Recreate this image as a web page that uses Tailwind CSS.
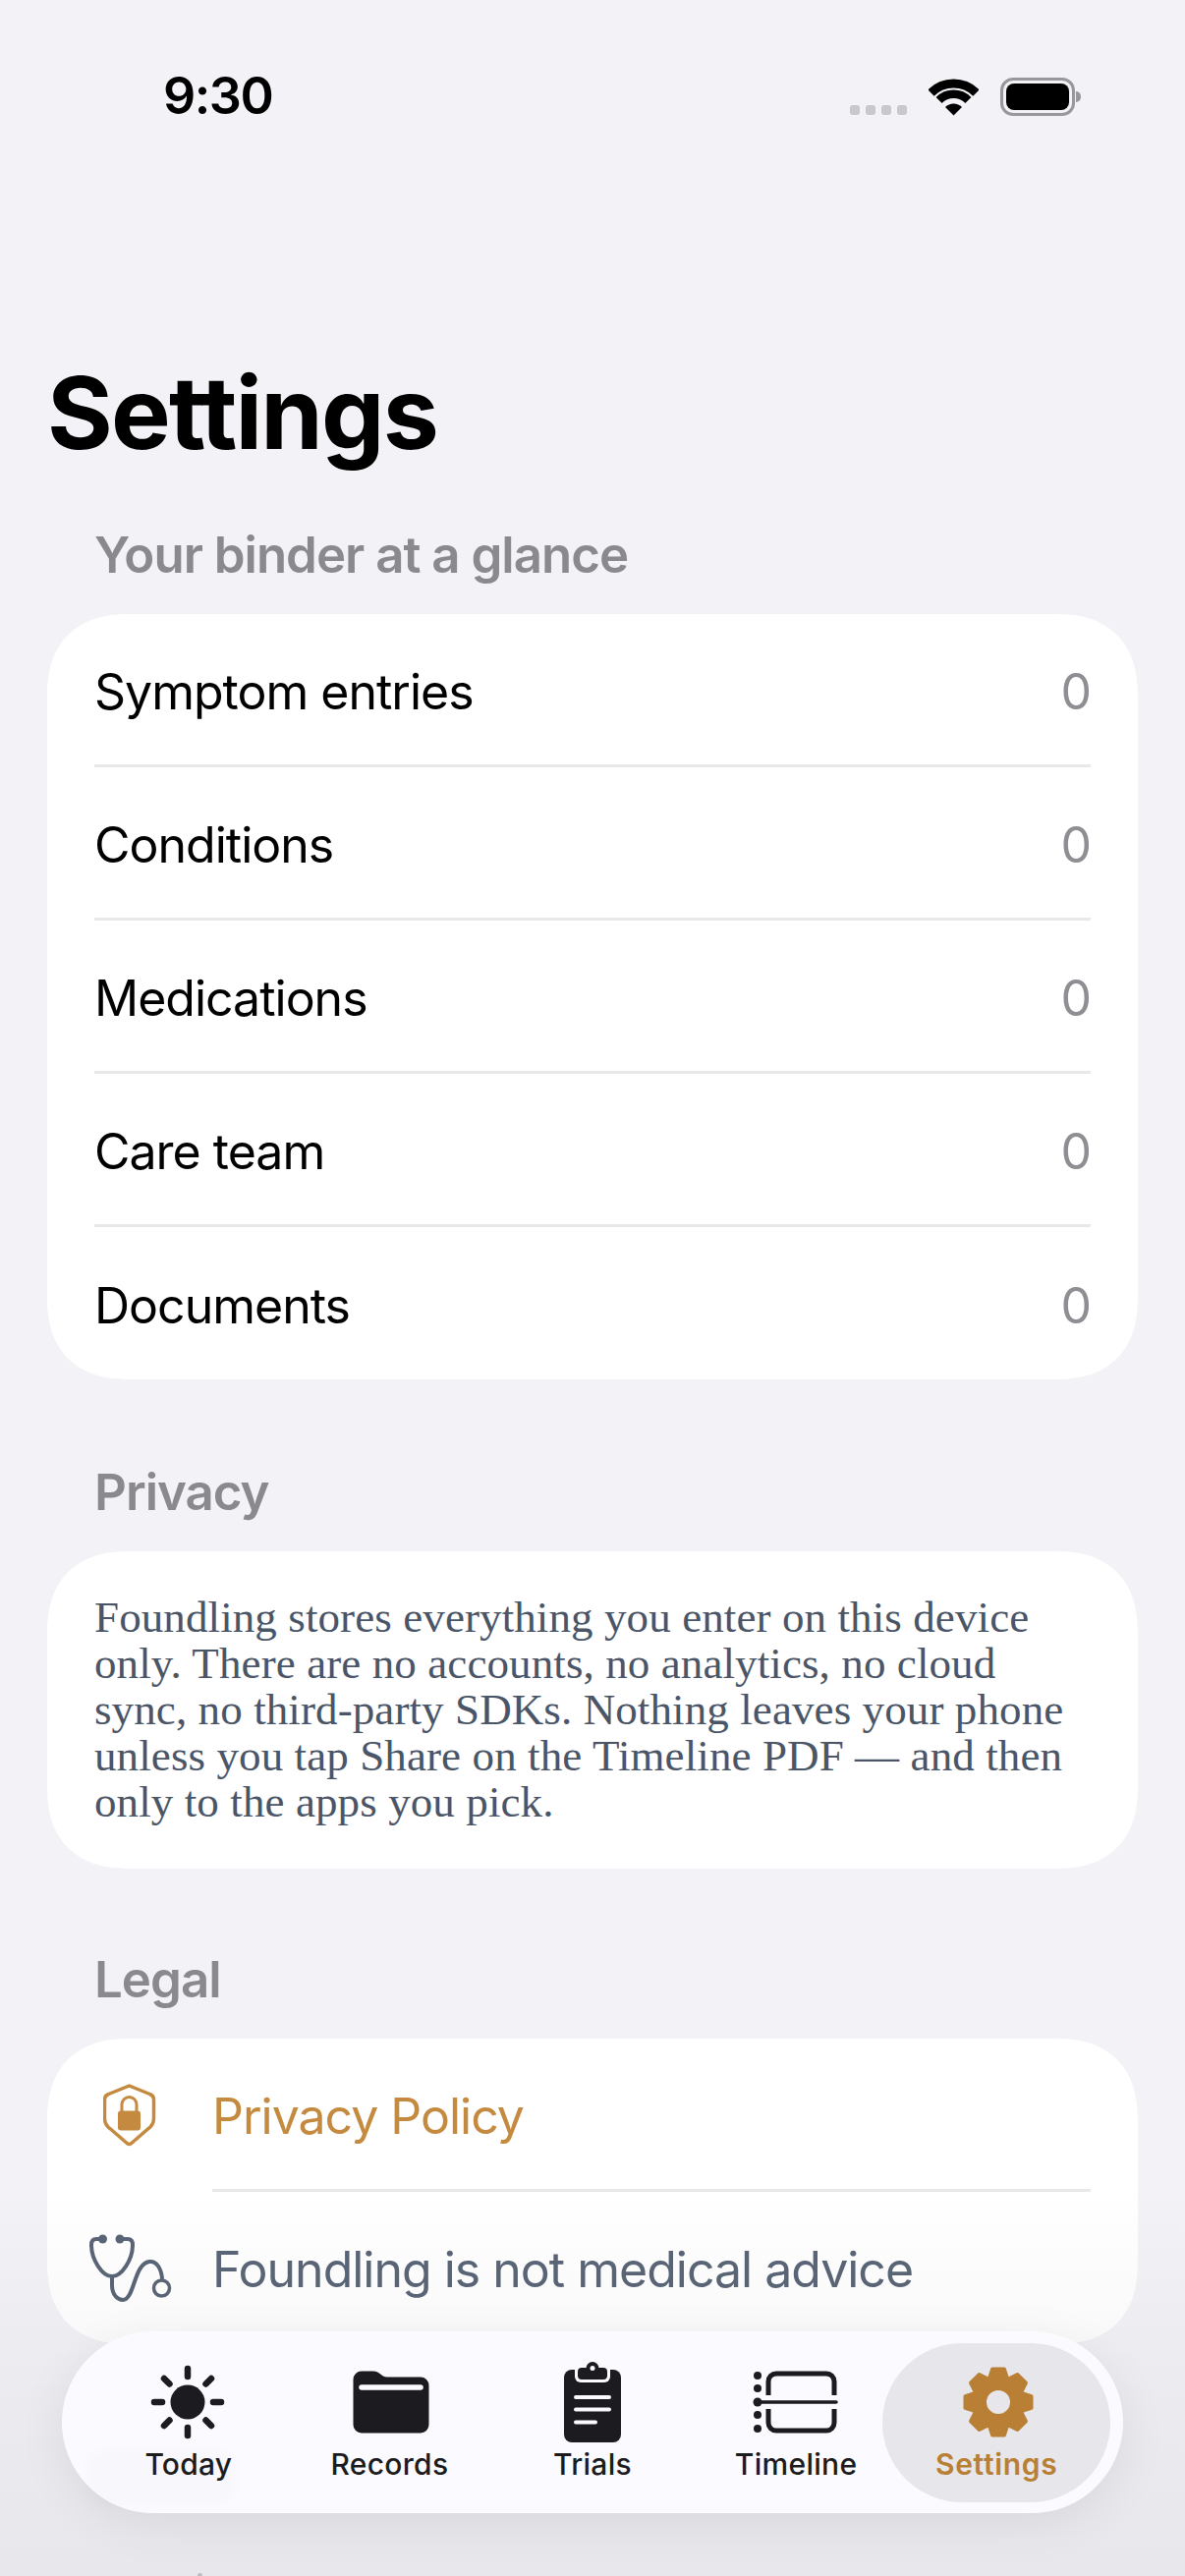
<!DOCTYPE html>
<html lang="en">
<head>
    <meta charset="UTF-8">
    <meta name="viewport" content="width=device-width, initial-scale=1.0">
    <title>Settings</title>
    <script src="https://cdn.jsdelivr.net/npm/@tailwindcss/browser@4"></script>
</head>
<body>
    <div class="relative w-[1206px] h-[2622px] overflow-hidden bg-[#f2f2f7] font-[Inter,sans-serif] text-black">

        <!-- status bar -->
        <div class="flex items-center justify-between h-[40px] mt-[78px] pl-[166px] pr-[106px]">
            <span class="text-[52px] leading-[40px] font-semibold tracking-[-1.5px]">9:30</span>
            <div class="flex items-start">
                <div class="flex gap-[6px] mt-[28px] mr-[22px]">
                    <span class="w-[10px] h-[10px] rounded-[3px] bg-[#c7c7cc]"></span>
                    <span class="w-[10px] h-[10px] rounded-[3px] bg-[#c7c7cc]"></span>
                    <span class="w-[10px] h-[10px] rounded-[3px] bg-[#c7c7cc]"></span>
                    <span class="w-[10px] h-[10px] rounded-[3px] bg-[#c7c7cc]"></span>
                </div>
                <svg class="mt-[1px] mr-[22px]" width="51" height="38" viewBox="0 0 51 38" fill="none">
                    <path d="M2.5 14.5 A32.5 32.5 0 0 1 48.5 14.5" stroke="#000" stroke-width="9"/>
                    <path d="M10.6 22 A21 21 0 0 1 40.4 22" stroke="#000" stroke-width="8.5"/>
                    <path d="M25.5 37.5 L17 29 A12 12 0 0 1 34 29 Z" fill="#000"/>
                </svg>
                <div class="flex items-center">
                    <div class="w-[76px] h-[39px] rounded-[13px] border-[3px] border-[#98989c] p-[3px]">
                        <div class="w-full h-full rounded-[8px] bg-black"></div>
                    </div>
                    <div class="w-[5px] h-[11px] ml-[1px] rounded-r-full bg-[#98989c]"></div>
                </div>
            </div>
        </div>

        <h1 class="ml-[48px] mt-[241px] text-[102px] leading-[122px] font-bold tracking-[-1.8px]">Settings</h1>

        <!-- binder counts -->
        <h2 class="ml-[96px] mt-[54px] h-[60px] text-[51px] leading-[60px] font-semibold tracking-[-1px] text-[#8a8a8e]">Your binder at a glance</h2>
        <div class="mx-[48px] mt-[30px] px-[48px] rounded-[84px] [corner-shape:superellipse(1.25)] bg-white text-[50px] tracking-[-1px]">
            <div class="flex items-center justify-between h-[156px] pt-[6px] border-b-[3px] border-[#e8e8ea]"><span>Symptom entries</span><span class="text-[#8e8e93]">0</span></div>
            <div class="flex items-center justify-between h-[156px] pt-[6px] border-b-[3px] border-[#e8e8ea]"><span>Conditions</span><span class="text-[#8e8e93]">0</span></div>
            <div class="flex items-center justify-between h-[156px] pt-[6px] border-b-[3px] border-[#e8e8ea]"><span>Medications</span><span class="text-[#8e8e93]">0</span></div>
            <div class="flex items-center justify-between h-[156px] pt-[6px] border-b-[3px] border-[#e8e8ea]"><span>Care team</span><span class="text-[#8e8e93]">0</span></div>
            <div class="flex items-center justify-between h-[155px] pt-[6px]"><span>Documents</span><span class="text-[#8e8e93]">0</span></div>
        </div>

        <!-- privacy -->
        <h2 class="ml-[96px] mt-[85px] h-[60px] text-[51px] leading-[60px] font-semibold tracking-[-1px] text-[#8a8a8e]">Privacy</h2>
        <div class="mx-[48px] mt-[30px] h-[323px] px-[48px] py-[44px] rounded-[84px] [corner-shape:superellipse(1.25)] bg-white font-['Liberation_Serif',serif] text-[45px] leading-[47px] tracking-[0.1px] text-[#4a5568]">
            Foundling stores everything you enter on this device<br>only. There are no accounts, no analytics, no cloud<br>sync, no third-party SDKs. Nothing leaves your phone<br>unless you tap Share on the Timeline PDF — and then<br>only to the apps you pick.
        </div>

        <!-- legal -->
        <h2 class="ml-[96px] mt-[83px] h-[60px] text-[51px] leading-[60px] font-semibold tracking-[-1px] text-[#8a8a8e]">Legal</h2>
        <div class="mx-[48px] mt-[30px] pr-[48px] rounded-[84px] [corner-shape:superellipse(1.25)] bg-white text-[50px] tracking-[-1px]">
            <div class="flex items-center h-[156px]">
                <div class="flex justify-center w-[168px]">
                    <svg width="54" height="64" viewBox="0 0 54 64" fill="none">
                        <path d="M26.5 2 L47.5 10.5 Q51.5 12 51.5 16 V35 Q51.5 42 45.5 46 L28.5 60.8 Q26.5 62 24.5 60.8 L7.5 46 Q1.5 42 1.5 35 V16 Q1.5 12 5.5 10.5 Z" stroke="#c48a3f" stroke-width="3.5" stroke-linejoin="round"/>
                        <path d="M19 28 V21 a7.5 7.5 0 0 1 15 0 V28" stroke="#c48a3f" stroke-width="3"/>
                        <rect x="15" y="27.5" width="23" height="20" rx="3" fill="#c48a3f"/>
                    </svg>
                </div>
                <div class="flex items-center flex-1 h-full pt-[6px] border-b-[3px] border-[#e8e8ea] text-[#c48a3f]">Privacy Policy</div>
            </div>
            <div class="flex items-center h-[155px]">
                <div class="flex justify-center w-[168px]">
                    <svg class="ml-[2px]" width="86" height="70" viewBox="0 0 86 70" fill="none" stroke="#5a6577" stroke-width="4" stroke-linecap="round">
                        <path d="M11 5 H8 Q3 5 3 11 C3 26 14 43 24 43 C34 43 45 26 45 11 Q45 5 40 5 H36"/>
                        <path d="M24 43 V52 C24 62 30 67 35 67 C47 67 46 30 62 28 C70 27 74 36 75 45"/>
                        <circle cx="74.5" cy="55" r="8" stroke-width="3.5"/>
                        <circle cx="14.5" cy="5" r="4.5" fill="#5a6577" stroke="none"/>
                        <circle cx="32" cy="5" r="4.5" fill="#5a6577" stroke="none"/>
                    </svg>
                </div>
                <div class="mt-[4px] text-[#5a6577]">Foundling is not medical advice</div>
            </div>
        </div>

        <!-- fade at the bottom of the scroll area -->
        <div class="absolute inset-x-0 bottom-0 h-[400px] bg-gradient-to-b from-black/0 via-black/[.03] to-black/[.045] pointer-events-none"></div>
        <div class="absolute left-[201px] bottom-[-2px] w-[5px] h-[5px] rounded-full bg-[#bdbdc2]"></div>

        <!-- tab bar -->
        <nav class="absolute left-[63px] top-[2373px] w-[1080px] h-[185px] grid grid-cols-5 px-[25px] rounded-full bg-[#fbfbff] border border-[#fdfdff] shadow-[0_12px_50px_rgba(0,0,0,0.07)] text-[30px] font-medium text-[#1c1c20]">
            <!-- what scrolls underneath only just shows through -->
            <div class="absolute left-[25px] top-[118px] w-[150px] h-[58px] rounded-[20px] bg-black/[.012] blur-[5px]"></div>
            <div class="relative flex flex-col items-center pt-[26px]">
                <svg class="ml-[-2px]" width="90" height="90" viewBox="0 0 90 90" fill="none" stroke="#1c1c20" stroke-width="6.5" stroke-linecap="round">
                    <circle cx="45" cy="45" r="17.5" fill="#1c1c20" stroke="none"/>
                    <path d="M45 11 V19 M45 71 V79 M11 45 H19 M71 45 H79 M21 21 L26.5 26.5 M63.5 63.5 L69 69 M21 69 L26.5 63.5 M63.5 26.5 L69 21"/>
                </svg>
                <span class="leading-[36px] tracking-[0.2px]">Today</span>
            </div>
            <div class="flex flex-col items-center pt-[26px]">
                <svg class="ml-[2px]" width="90" height="90" viewBox="0 0 90 90" fill="none">
                    <path d="M6.5 22 a8.5 8.5 0 0 1 8.5 -8.5 H27 c3 0 4.5 1 6.5 2.5 l2 1.5 c1.5 1.2 3 2 5 2 H75 a8.5 8.5 0 0 1 8.5 8.5 V68 a8.5 8.5 0 0 1 -8.5 8.5 H15 a8.5 8.5 0 0 1 -8.5 -8.5 Z" fill="#1c1c20"/>
                    <path d="M15 30 H75" stroke="#fbfbff" stroke-width="5.5" stroke-linecap="round"/>
                </svg>
                <span class="mr-[2px] leading-[36px] tracking-[0.3px]">Records</span>
            </div>
            <div class="flex flex-col items-center pt-[26px]">
                <svg width="90" height="90" viewBox="0 0 90 90" fill="none">
                    <rect x="16" y="12" width="58" height="74" rx="8" fill="#1c1c20"/>
                    <rect x="27" y="5" width="36" height="20" rx="6" fill="#fbfbff"/>
                    <rect x="30" y="10" width="30" height="12" rx="4" fill="#1c1c20"/>
                    <circle cx="45" cy="10.5" r="6.5" fill="#1c1c20"/>
                    <circle cx="45" cy="10.5" r="2.5" fill="#fbfbff"/>
                    <path d="M28 40 H62 M28 52.5 H62 M28 65.5 H48" stroke="#fbfbff" stroke-width="4" stroke-linecap="round"/>
                </svg>
                <span class="leading-[36px] tracking-[0.3px]">Trials</span>
            </div>
            <div class="flex flex-col items-center pt-[26px]">
                <svg width="90" height="90" viewBox="0 0 90 90" fill="none" stroke="#1c1c20">
                    <path d="M18 38 V24 a8 8 0 0 1 8 -8 H77 a8 8 0 0 1 8 8 V38 M18 52 V66 a8 8 0 0 0 8 8 H77 a8 8 0 0 0 8 -8 V52" stroke-width="5"/>
                    <path d="M7 45 H87" stroke-width="3.5" stroke-linecap="round"/>
                    <g fill="#1c1c20" stroke="none">
                        <circle cx="7" cy="18" r="4"/>
                        <circle cx="7" cy="31" r="4"/>
                        <circle cx="7" cy="45" r="4.5"/>
                        <circle cx="7" cy="58" r="4"/>
                        <circle cx="7" cy="72" r="4"/>
                    </g>
                </svg>
                <span class="ml-[3px] leading-[36px] tracking-[0.3px]">Timeline</span>
            </div>
            <div class="relative flex flex-col items-center pt-[26px] text-[#b97f35]">
                <div class="absolute -inset-x-[13px] top-[11px] bottom-[10px] rounded-[81px] bg-[#e6e6eb]"></div>
                <svg class="relative ml-[4px]" width="90" height="90" viewBox="-45 -45 90 90">
                    <path fill="#b97f35" stroke="#b97f35" stroke-width="4" stroke-linejoin="round" fill-rule="evenodd" d="M24.4 -8.9 L33.5 -5.9 L33.5 5.9 L24.4 8.9 L23.6 11 L27.9 19.5 L19.5 27.9 L11 23.6 L8.9 24.4 L5.9 33.5 L-5.9 33.5 L-8.9 24.4 L-11 23.6 L-19.5 27.9 L-27.9 19.5 L-23.6 11 L-24.4 8.9 L-33.5 5.9 L-33.5 -5.9 L-24.4 -8.9 L-23.6 -11 L-27.9 -19.5 L-19.5 -27.9 L-11 -23.6 L-8.9 -24.4 L-5.9 -33.5 L5.9 -33.5 L8.9 -24.4 L11 -23.6 L19.5 -27.9 L27.9 -19.5 L23.6 -11 Z M14 0 A14 14 0 1 0 -14 0 A14 14 0 1 0 14 0 Z"/>
                </svg>
                <span class="relative leading-[36px] font-semibold tracking-[0.7px]">Settings</span>
            </div>
        </nav>
    </div>
</body>
</html>
